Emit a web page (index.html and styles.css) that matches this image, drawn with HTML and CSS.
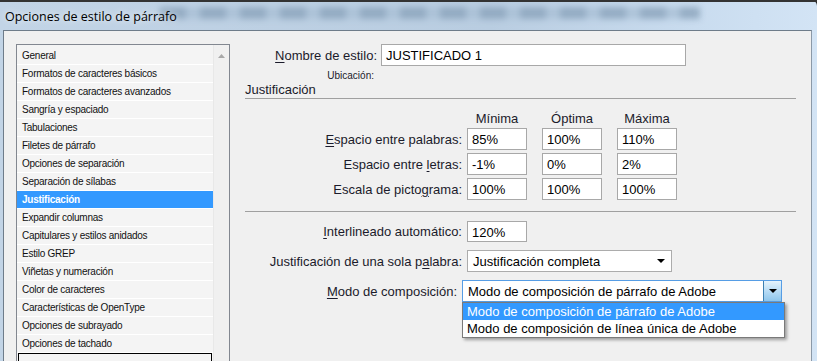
FILE: index.html
```html
<!DOCTYPE html>
<html lang="es">
<head>
    <meta charset="UTF-8">
    <meta name="viewport" content="width=device-width, initial-scale=1.0">
    <title>Opciones de estilo de párrafo</title>
    <link rel="stylesheet" href="styles.css">
</head>
<body>
    <div class="window">
        <header class="titlebar">
            <span class="title">Opciones de estilo de párrafo</span>
        </header>
        <div class="frame">
            <div class="client">
                <div class="sidebar">
                    <ul class="list">
                        <li>General</li>
                        <li>Formatos de caracteres básicos</li>
                        <li>Formatos de caracteres avanzados</li>
                        <li>Sangría y espaciado</li>
                        <li>Tabulaciones</li>
                        <li>Filetes de párrafo</li>
                        <li>Opciones de separación</li>
                        <li>Separación de sílabas</li>
                        <li class="selected">Justificación</li>
                        <li>Expandir columnas</li>
                        <li>Capitulares y estilos anidados</li>
                        <li>Estilo GREP</li>
                        <li>Viñetas y numeración</li>
                        <li>Color de caracteres</li>
                        <li>Características de OpenType</li>
                        <li>Opciones de subrayado</li>
                        <li>Opciones de tachado</li>
                        <li class="focused"></li>
                    </ul>
                    <div class="scrollbar">
                        <svg width="7" height="4" viewBox="0 0 7 4"><path d="M0 4 L3.5 0 L7 4 Z" fill="#a8a8a8"/></svg>
                    </div>
                </div>

                <section class="panel">
                    <div class="row name-row">
                        <label class="label"><u>N</u>ombre de estilo:</label>
                        <div class="field name-field">JUSTIFICADO 1</div>
                    </div>
                    <div class="location">Ubicación:</div>
                    <h2 class="section-title">Justificación</h2>

                    <div class="spacing-grid">
                        <span></span>
                        <span class="col-head">Mínima</span>
                        <span class="col-head">Óptima</span>
                        <span class="col-head">Máxima</span>

                        <label class="label"><u>E</u>spacio entre palabras:</label>
                        <div class="field">85%</div>
                        <div class="field">100%</div>
                        <div class="field">110%</div>

                        <label class="label">Espacio entre <u>l</u>etras:</label>
                        <div class="field">-1%</div>
                        <div class="field">0%</div>
                        <div class="field">2%</div>

                        <label class="label">Escala de picto<u>g</u>rama:</label>
                        <div class="field">100%</div>
                        <div class="field">100%</div>
                        <div class="field">100%</div>
                    </div>

                    <div class="divider"></div>

                    <div class="row">
                        <label class="label"><u>I</u>nterlineado automático:</label>
                        <div class="field">120%</div>
                    </div>
                    <div class="row">
                        <label class="label">Justificación de una sola p<u>a</u>labra:</label>
                        <div class="select single-word">
                            <span>Justificación completa</span>
                            <span class="caret"></span>
                        </div>
                    </div>
                    <div class="row compose-row">
                        <label class="label"><u>M</u>odo de composición:</label>
                        <div class="select compose open">
                            <span>Modo de composición de párrafo de Adobe</span>
                            <span class="drop-button"><span class="caret"></span></span>
                            <ul class="dropdown">
                                <li class="active">Modo de composición de párrafo de Adobe</li>
                                <li>Modo de composición de línea única de Adobe</li>
                            </ul>
                        </div>
                    </div>
                </section>
            </div>
        </div>
    </div>
</body>
</html>
```

FILE: styles.css
```css
body {
    margin: 0;
    padding: 0;
    width: 817px;
    height: 361px;
    overflow: hidden;
    font-family: "Liberation Sans", Arial, sans-serif;
    color: #1b1b2b;
    background: #2c2c2c;
}
.window {
    height: 361px;
    display: flex;
    flex-direction: column;
    background: linear-gradient(to right, #c2d4e6, #b9cde1 60%, #c9dcef 85%, #d3e4f5);
    border-top-right-radius: 6px;
}
.titlebar {
    height: 30px;
    position: relative;
    display: flex;
    align-items: center;
    padding-left: 5px;
    overflow: hidden;
    border-top: 2px solid #333;
    box-sizing: border-box;
}
.titlebar::before {
    content: "";
    position: absolute;
    left: 160px;
    top: 5px;
    width: 540px;
    height: 12px;
    background: repeating-linear-gradient(to right, #8aa3bb 0 26px, #a9c0d6 26px 40px);
    filter: blur(3px);
    opacity: 0.8;
}
.title {
    position: relative;
    font-family: "Open Sans", "Liberation Sans", sans-serif;
    font-size: 12.5px;
    color: #000;
    text-shadow: 0 0 6px rgba(255, 255, 255, 0.9);
}
.frame {
    flex: 1;
    display: flex;
    padding: 0 5px 0 3px;
    min-height: 0;
}
.client {
    flex: 1;
    display: flex;
    background: #f0f0f0;
    border-top: 1px solid #6e7c8a;
    border-left: 1px solid #6e7c8a;
    border-right: 1px solid #8b99a8;
    padding: 13px 0 0 12px;
    overflow: hidden;
}

/* category list */
.sidebar {
    display: flex;
    width: 212px;
    border: 1px solid #828790;
    border-bottom: none;
    background: #fff;
    align-self: flex-start;
    height: 330px;
}
.list {
    list-style: none;
    margin: 0;
    padding: 2px 0 0;
    width: 196px;
    background: #f4f4f4;
}
.list li {
    height: 17px;
    line-height: 17px;
    border-bottom: 1px solid #fff;
    padding-left: 5px;
    font-family: "Liberation Sans", Tahoma, sans-serif;
    font-size: 10px;
    letter-spacing: -0.25px;
    color: #111;
    white-space: nowrap;
}
.list li.selected {
    background: #3399ff;
    color: #fff;
    font-weight: bold;
}
.list li.focused {
    border: 1px solid #000;
    margin: 0 1px;
    height: 20px;
    background: #f4f4f4;
}
.scrollbar {
    width: 16px;
    background: #f0f0f0;
    border-left: 1px solid #e8e8e8;
    display: flex;
    justify-content: center;
    padding-top: 9px;
    box-sizing: border-box;
}

/* right panel */
.panel {
    margin-left: 15px;
    width: 551px;
    font-size: 13px;
}
.row {
    display: flex;
    align-items: center;
    gap: 5px;
    margin-top: 8px;
}
.label {
    width: 217px;
    text-align: right;
    white-space: nowrap;
}
.label u {
    text-decoration-thickness: 1px;
    text-underline-offset: 2px;
}
.field {
    width: 60px;
    height: 21px;
    line-height: 21px;
    box-sizing: border-box;
    background: #fff;
    border: 1px solid #a8a8a8;
    padding-left: 4px;
    color: #000;
    white-space: nowrap;
}
.name-row {
    margin-top: 0;
    gap: 4px;
}
.name-row .label {
    width: 132px;
}
.name-field {
    width: 305px;
    height: 22px;
    line-height: 21px;
}
.location {
    width: 129px;
    text-align: right;
    font-size: 10px;
    margin-top: 4px;
    line-height: 12px;
}
.section-title {
    margin: 1px 0 0;
    font-size: 13px;
    font-weight: normal;
    line-height: 14px;
    padding-bottom: 1px;
    border-bottom: 1px solid #a0a0a0;
}
.spacing-grid {
    display: grid;
    grid-template-columns: 207px 60px 60px 60px;
    column-gap: 15px;
    row-gap: 3px;
    align-items: center;
    margin-top: 13px;
}
.spacing-grid .label {
    width: auto;
    margin-right: -10px;
}
.spacing-grid .field {
    height: 22px;
}
.col-head {
    text-align: center;
    line-height: 14px;
    margin-bottom: -1px;
}
.divider {
    height: 1px;
    background: #a0a0a0;
    margin-top: 11px;
}
.divider + .row {
    margin-top: 9px;
}
.select {
    position: relative;
    height: 22px;
    box-sizing: border-box;
    display: flex;
    align-items: center;
    justify-content: space-between;
    background: #fff;
    border: 1px solid #acacac;
    padding-left: 5px;
    color: #000;
}
.single-word {
    width: 205px;
    padding-right: 6px;
}
.caret {
    width: 0;
    height: 0;
    border-left: 4px solid transparent;
    border-right: 4px solid transparent;
    border-top: 4px solid #000;
}
.compose-row .label {
    width: 212px;
}
.compose {
    width: 320px;
    border-color: #569de5;
}
.drop-button {
    width: 18px;
    height: 20px;
    box-sizing: border-box;
    border-left: 1px solid #3c7fb1;
    background: linear-gradient(#e5f3fb, #b8dcf5 50%, #8ec6ec);
    display: flex;
    align-items: center;
    justify-content: center;
}
.dropdown {
    position: absolute;
    left: -1px;
    top: 21px;
    width: 321px;
    margin: 0;
    padding: 0;
    list-style: none;
    background: #fff;
    border: 1px solid #7a7a7a;
    box-shadow: 2px 2px 3px rgba(0, 0, 0, 0.35);
    z-index: 2;
}
.dropdown li {
    height: 17px;
    line-height: 17px;
    padding-left: 4px;
    color: #000;
}
.dropdown li.active {
    background: #3399ff;
    color: #fff;
}
```
